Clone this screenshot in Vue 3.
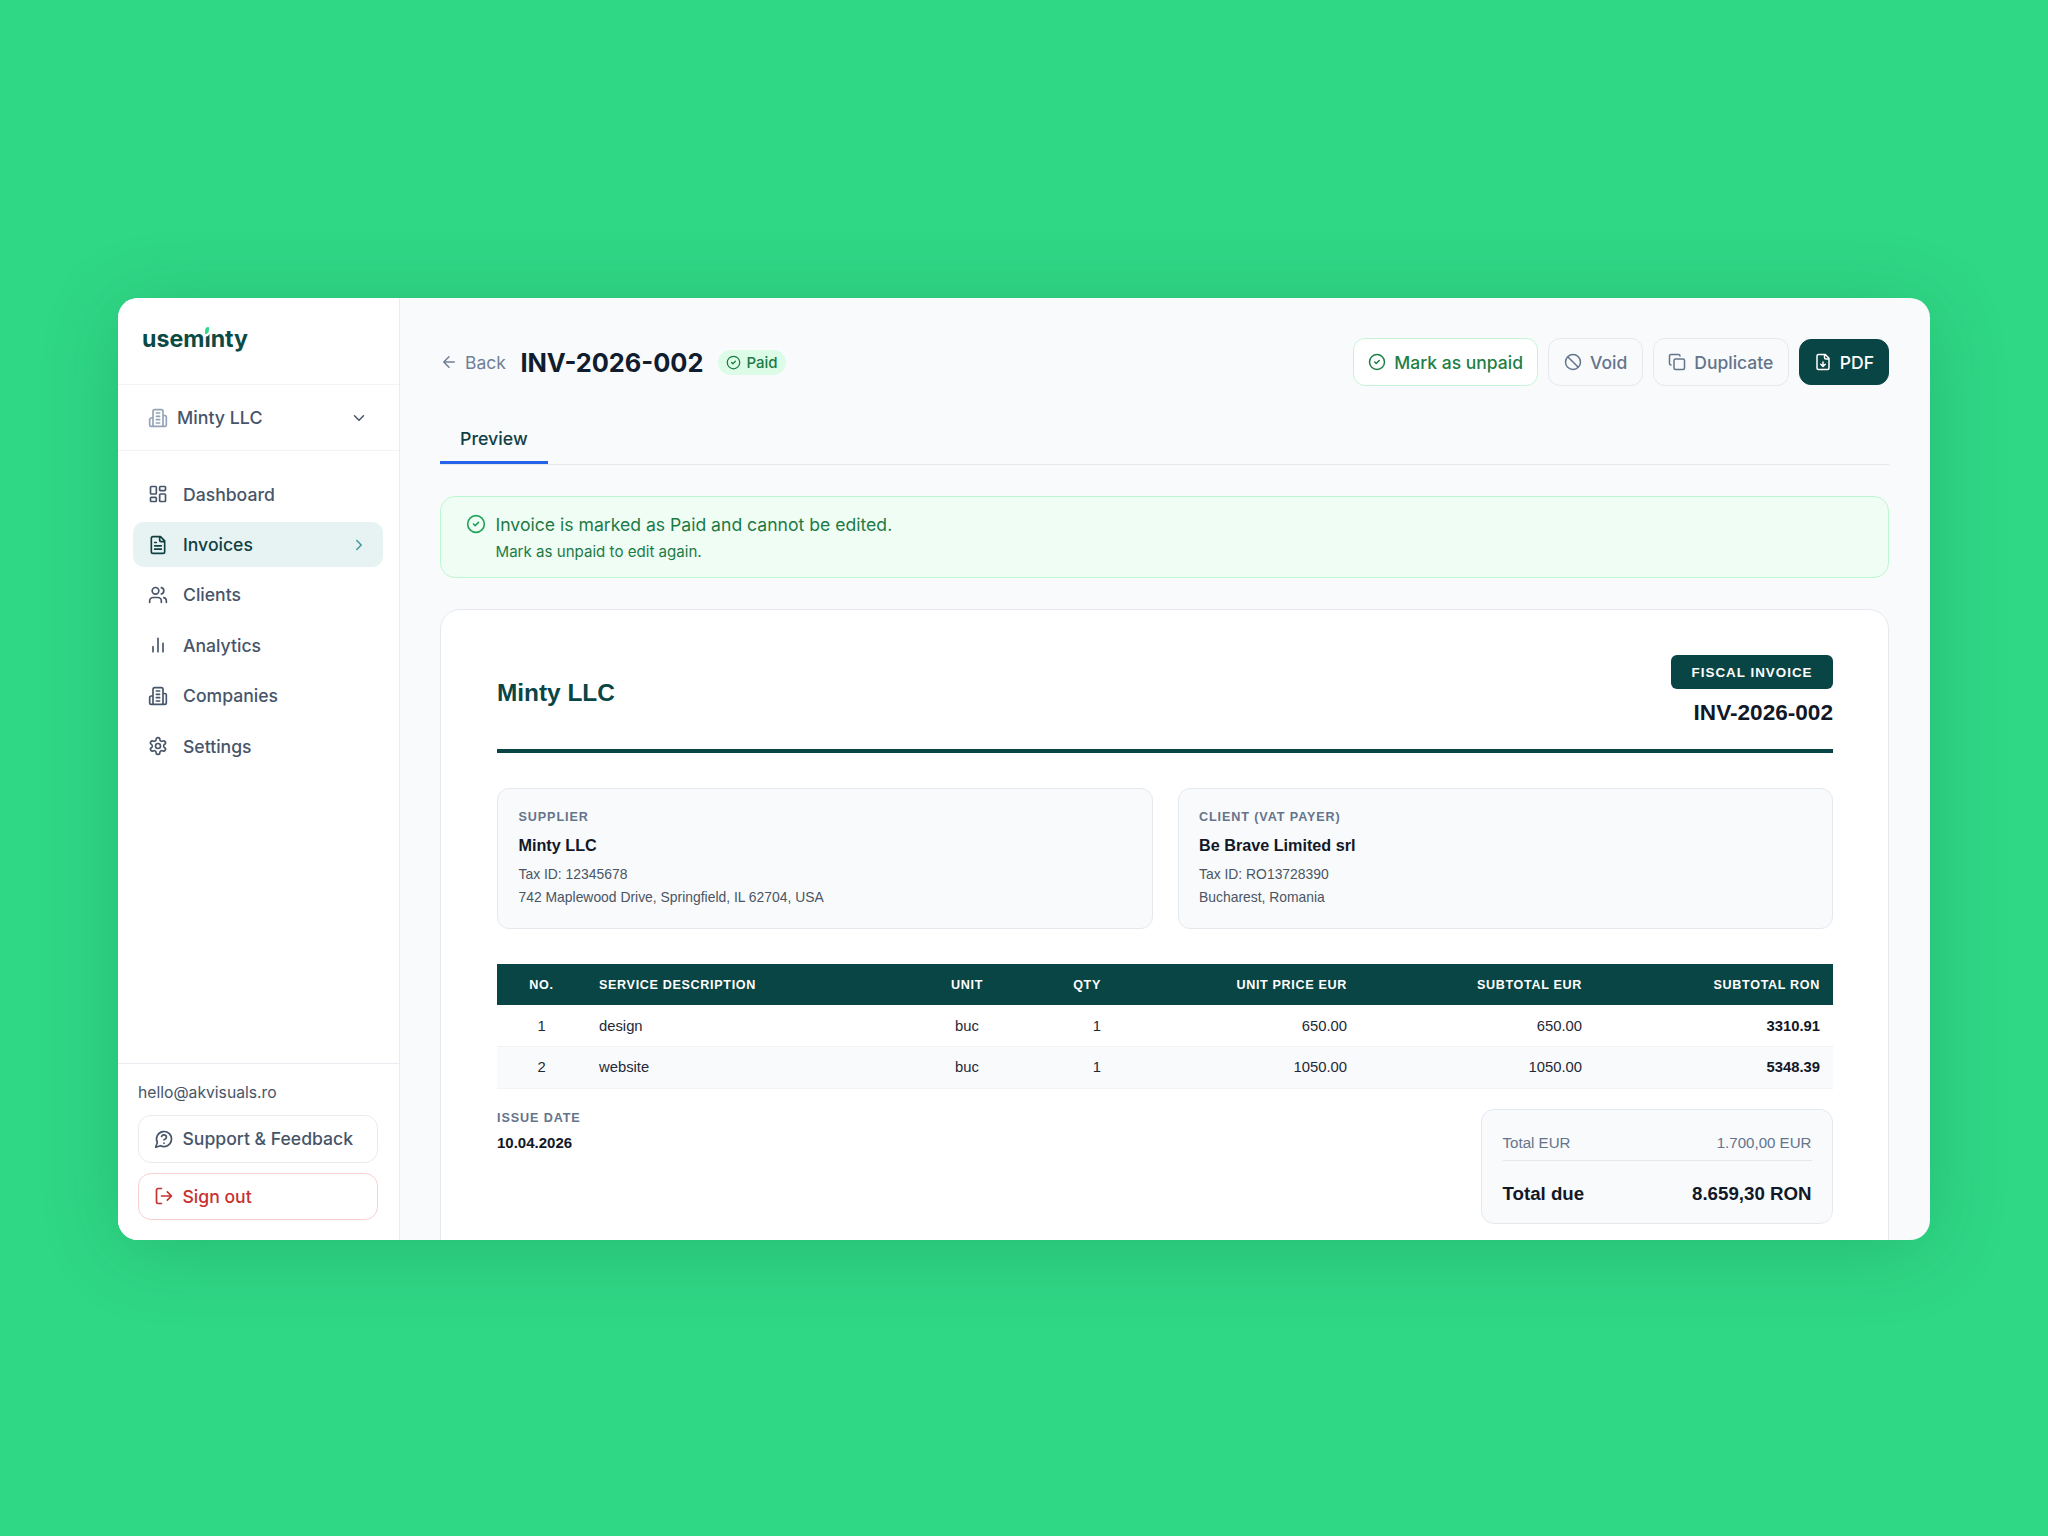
<template>
  <div class="page">
    <div class="window">
      <aside class="sidebar">
        <div class="logo">
          <span class="logo-text">useminty<i class="leaf"></i></span>
        </div>
        <div class="company">
          <svg class="ic company-ic" viewBox="0 0 24 24"><path :d="icons.building" /></svg>
          <span class="company-name">Minty LLC</span>
          <svg class="ic chev" viewBox="0 0 24 24"><path :d="icons.chevronDown" /></svg>
        </div>
        <nav class="nav">
          <a
            v-for="item in navItems"
            :key="item.label"
            class="nav-item"
            :class="{ active: item.active }"
          >
            <svg class="ic" viewBox="0 0 24 24"><path :d="icons[item.icon]" /></svg>
            <span>{{ item.label }}</span>
            <svg v-if="item.active" class="ic chev chev-active" viewBox="0 0 24 24"><path :d="icons.chevronRight" /></svg>
          </a>
        </nav>
        <div class="side-footer">
          <div class="email">hello@akvisuals.ro</div>
          <button class="side-btn">
            <svg class="ic" viewBox="0 0 24 24"><path :d="icons.support" /></svg>
            Support &amp; Feedback
          </button>
          <button class="side-btn danger">
            <svg class="ic" viewBox="0 0 24 24"><path :d="icons.logout" /></svg>
            Sign out
          </button>
        </div>
      </aside>

      <main class="main">
        <header class="top">
          <div class="top-left">
            <a class="back">
              <svg class="ic" viewBox="0 0 24 24"><path :d="icons.arrowLeft" /></svg>
              Back
            </a>
            <h1 class="title">INV-2026-002</h1>
            <span class="paid">
              <svg class="ic" viewBox="0 0 24 24"><path :d="icons.check" /></svg>
              Paid
            </span>
          </div>
          <div class="actions">
            <button class="btn btn-green">
              <svg class="ic" viewBox="0 0 24 24"><path :d="icons.check" /></svg>
              Mark as unpaid
            </button>
            <button class="btn">
              <svg class="ic" viewBox="0 0 24 24"><path :d="icons.ban" /></svg>
              Void
            </button>
            <button class="btn">
              <svg class="ic" viewBox="0 0 24 24"><path :d="icons.copy" /></svg>
              Duplicate
            </button>
            <button class="btn btn-dark">
              <svg class="ic" viewBox="0 0 24 24"><path :d="icons.fileDown" /></svg>
              PDF
            </button>
          </div>
        </header>

        <div class="tabs">
          <span class="tab">Preview</span>
        </div>

        <div class="alert">
          <svg class="ic" viewBox="0 0 24 24"><path :d="icons.check" /></svg>
          <div>
            <div class="alert-title">Invoice is marked as Paid and cannot be edited.</div>
            <div class="alert-sub">Mark as unpaid to edit again.</div>
          </div>
        </div>

        <section class="invoice">
          <div class="inv-head">
            <div class="inv-company">Minty LLC</div>
            <div class="inv-meta">
              <span class="fiscal">FISCAL INVOICE</span>
              <div class="inv-number">INV-2026-002</div>
            </div>
          </div>

          <div class="parties">
            <div v-for="party in parties" :key="party.label" class="party">
              <div class="label">{{ party.label }}</div>
              <div class="party-name">{{ party.name }}</div>
              <div class="party-line">{{ party.tax }}</div>
              <div class="party-line">{{ party.address }}</div>
            </div>
          </div>

          <table class="lines">
            <thead>
              <tr>
                <th class="c-no">NO.</th>
                <th class="c-desc">SERVICE DESCRIPTION</th>
                <th class="c-unit">UNIT</th>
                <th class="c-num c-qty">QTY</th>
                <th class="c-num c-price">UNIT PRICE EUR</th>
                <th class="c-num c-eur">SUBTOTAL EUR</th>
                <th class="c-num c-ron">SUBTOTAL RON</th>
              </tr>
            </thead>
            <tbody>
              <tr v-for="row in rows" :key="row.no">
                <td class="c-no">{{ row.no }}</td>
                <td class="c-desc">{{ row.desc }}</td>
                <td class="c-unit">buc</td>
                <td class="c-num">{{ row.qty }}</td>
                <td class="c-num">{{ row.price }}</td>
                <td class="c-num">{{ row.eur }}</td>
                <td class="c-num strong">{{ row.ron }}</td>
              </tr>
            </tbody>
          </table>

          <div class="inv-foot">
            <div>
              <div class="label">ISSUE DATE</div>
              <div class="issue-date">10.04.2026</div>
            </div>
            <div class="totals">
              <div class="total-row">
                <span>Total EUR</span>
                <span>1.700,00 EUR</span>
              </div>
              <div class="total-due">
                <span>Total due</span>
                <span>8.659,30 RON</span>
              </div>
            </div>
          </div>
        </section>
      </main>
    </div>
  </div>
</template>

<script setup>
const icons = {
  building: 'M6 22V4a2 2 0 0 1 2-2h8a2 2 0 0 1 2 2v18ZM6 12H4a2 2 0 0 0-2 2v6a2 2 0 0 0 2 2h2M18 9h2a2 2 0 0 1 2 2v9a2 2 0 0 1-2 2h-2M10 6h4M10 10h4M10 14h4M10 18h4',
  chevronDown: 'm6 9 6 6 6-6',
  chevronRight: 'm9 18 6-6-6-6',
  dashboard: 'M4 3h5a1 1 0 0 1 1 1v7a1 1 0 0 1-1 1H4a1 1 0 0 1-1-1V4a1 1 0 0 1 1-1ZM15 3h5a1 1 0 0 1 1 1v3a1 1 0 0 1-1 1h-5a1 1 0 0 1-1-1V4a1 1 0 0 1 1-1ZM15 12h5a1 1 0 0 1 1 1v7a1 1 0 0 1-1 1h-5a1 1 0 0 1-1-1v-7a1 1 0 0 1 1-1ZM4 16h5a1 1 0 0 1 1 1v3a1 1 0 0 1-1 1H4a1 1 0 0 1-1-1v-3a1 1 0 0 1 1-1Z',
  file: 'M15 2H6a2 2 0 0 0-2 2v16a2 2 0 0 0 2 2h12a2 2 0 0 0 2-2V7ZM14 2v4a2 2 0 0 0 2 2h4M10 9H8M16 13H8M16 17H8',
  users: 'M16 21v-2a4 4 0 0 0-4-4H6a4 4 0 0 0-4 4v2M9 3a4 4 0 1 0 0 8a4 4 0 1 0 0-8M22 21v-2a4 4 0 0 0-3-3.87M16 3.13a4 4 0 0 1 0 7.75',
  chart: 'M18 20V10M12 20V4M6 20v-6',
  settings: 'M12.22 2h-.44a2 2 0 0 0-2 2v.18a2 2 0 0 1-1 1.73l-.43.25a2 2 0 0 1-2 0l-.15-.08a2 2 0 0 0-2.73.73l-.22.38a2 2 0 0 0 .73 2.73l.15.1a2 2 0 0 1 1 1.72v.51a2 2 0 0 1-1 1.74l-.15.09a2 2 0 0 0-.73 2.73l.22.38a2 2 0 0 0 2.73.73l.15-.08a2 2 0 0 1 2 0l.43.25a2 2 0 0 1 1 1.73V20a2 2 0 0 0 2 2h.44a2 2 0 0 0 2-2v-.18a2 2 0 0 1 1-1.73l.43-.25a2 2 0 0 1 2 0l.15.08a2 2 0 0 0 2.73-.73l.22-.39a2 2 0 0 0-.73-2.73l-.15-.08a2 2 0 0 1-1-1.74v-.5a2 2 0 0 1 1-1.74l.15-.09a2 2 0 0 0 .73-2.73l-.22-.38a2 2 0 0 0-2.73-.73l-.15.08a2 2 0 0 1-2 0l-.43-.25a2 2 0 0 1-1-1.73V4a2 2 0 0 0-2-2zM12 9a3 3 0 1 0 0 6a3 3 0 1 0 0-6',
  support: 'M7.9 20A9 9 0 1 0 4 16.1L2 22ZM9.09 9a3 3 0 0 1 5.83 1c0 2-3 3-3 3M12 17h.01',
  logout: 'M9 21H5a2 2 0 0 1-2-2V5a2 2 0 0 1 2-2h4M16 17l5-5-5-5M21 12H9',
  arrowLeft: 'm12 19-7-7 7-7M19 12H5',
  check: 'M12 2a10 10 0 1 0 0 20a10 10 0 1 0 0-20M9 12l2 2 4-4',
  ban: 'M12 2a10 10 0 1 0 0 20a10 10 0 1 0 0-20M4.9 4.9l14.2 14.2',
  copy: 'M10 8h10a2 2 0 0 1 2 2v10a2 2 0 0 1-2 2H10a2 2 0 0 1-2-2V10a2 2 0 0 1 2-2ZM4 16c-1.1 0-2-.9-2-2V4c0-1.1.9-2 2-2h10c1.100 0 2 .9 2 2',
  fileDown: 'M15 2H6a2 2 0 0 0-2 2v16a2 2 0 0 0 2 2h12a2 2 0 0 0 2-2V7ZM14 2v4a2 2 0 0 0 2 2h4M12 18v-6M9 15l3 3 3-3'
}

const navItems = [
  { label: 'Dashboard', icon: 'dashboard' },
  { label: 'Invoices', icon: 'file', active: true },
  { label: 'Clients', icon: 'users' },
  { label: 'Analytics', icon: 'chart' },
  { label: 'Companies', icon: 'building' },
  { label: 'Settings', icon: 'settings' }
]

const parties = [
  { label: 'SUPPLIER', name: 'Minty LLC', tax: 'Tax ID: 12345678', address: '742 Maplewood Drive, Springfield, IL 62704, USA' },
  { label: 'CLIENT (VAT PAYER)', name: 'Be Brave Limited srl', tax: 'Tax ID: RO13728390', address: 'Bucharest, Romania' }
]

const rows = [
  { no: 1, desc: 'design', qty: 1, price: '650.00', eur: '650.00', ron: '3310.91' },
  { no: 2, desc: 'website', qty: 1, price: '1050.00', eur: '1050.00', ron: '5348.39' }
]
</script>

<style>
html,
body {
  margin: 0;
  background: #2fd885;
}
</style>

<style scoped>
.page {
  height: 100vh;
  padding-top: 2px;
  box-sizing: border-box;
  display: flex;
  align-items: center;
  justify-content: center;
  font-family: Inter, "Liberation Sans", sans-serif;
}

.window {
  width: 1812px;
  height: 942px;
  display: flex;
  border-radius: 20px;
  overflow: hidden;
  background: #f8fafc;
  box-shadow: 0 10px 80px rgba(0, 70, 45, 0.2);
}

.ic {
  width: 20px;
  height: 20px;
  flex: none;
  fill: none;
  stroke: currentColor;
  stroke-width: 2;
  stroke-linecap: round;
  stroke-linejoin: round;
}

/* sidebar */
.sidebar {
  width: 282px;
  flex: none;
  display: flex;
  flex-direction: column;
  background: #fff;
  border-right: 1.5px solid #e9edf2;
  box-sizing: border-box;
}

.logo {
  padding: 0 24px 5px;
  height: 81px;
  display: flex;
  align-items: center;
  border-bottom: 1.5px solid #f1f4f7;
}

.logo-text {
  position: relative;
  font-size: 23.2px;
  font-weight: 700;
  color: #0b4a45;
}

.leaf {
  position: absolute;
  left: 62.5px;
  top: 2px;
  width: 4.5px;
  height: 7px;
  background: #2fd985;
  border-radius: 70% 10% 70% 10%;
  box-shadow: 0 1px 0 1.5px #fff;
}

.company {
  height: 65px;
  padding: 0 31px 0 30px;
  display: flex;
  align-items: center;
  gap: 9px;
  border-bottom: 1.5px solid #f1f4f7;
  font-size: 17.8px;
  font-weight: 500;
  color: #475569;
}

.company-ic {
  color: #94a3b8;
}

.company-name {
  flex: 1;
}

.chev {
  width: 18px;
  height: 18px;
  color: #475569;
}

.nav {
  padding: 21px 16px 0 15px;
  display: flex;
  flex-direction: column;
  gap: 6px;
  flex: 1;
}

.nav-item {
  height: 44.4px;
  padding: 0 15px;
  display: flex;
  align-items: center;
  gap: 15px;
  border-radius: 11px;
  font-size: 17.6px;
  font-weight: 500;
  color: #475569;
}

.nav-item span {
  flex: 1;
}

.nav-item.active {
  background: #e6f3f2;
  color: #10403f;
}

.chev-active {
  color: #3f9a97;
}

.side-footer {
  border-top: 1.5px solid #e9edf2;
  padding: 18px 21px 20px 20px;
  display: flex;
  flex-direction: column;
}

.email {
  font-size: 15.7px;
  color: #475569;
  line-height: 22px;
  margin-bottom: 11px;
}

.side-btn {
  height: 47.5px;
  padding: 0 15px;
  display: flex;
  align-items: center;
  gap: 8.5px;
  background: #fff;
  border: 1.5px solid #e8ecf1;
  border-radius: 13px;
  font-family: inherit;
  font-size: 17.6px;
  font-weight: 500;
  color: #475569;
}

.side-btn.danger {
  margin-top: 10px;
  border-color: #f9cfd0;
  color: #c8302f;
}

/* header */
.main {
  flex: 1;
  min-width: 0;
  padding: 40px 41px 0 40px;
  box-sizing: border-box;
}

.top {
  height: 48px;
  display: flex;
  align-items: center;
  justify-content: space-between;
}

.top-left {
  display: flex;
  align-items: center;
}

.back {
  display: flex;
  align-items: center;
  gap: 7px;
  font-size: 17.5px;
  color: #718096;
}

.back .ic {
  width: 18px;
  height: 18px;
}

.title {
  margin: 0 14.5px;
  font-size: 25.4px;
  font-weight: 700;
  color: #111c2e;
}

.paid {
  height: 25px;
  padding: 0 8.5px;
  display: flex;
  align-items: center;
  gap: 5px;
  border-radius: 13px;
  background: #dcfce7;
  font-size: 15px;
  font-weight: 500;
  color: #1d7a45;
}

.paid .ic {
  width: 15px;
  height: 15px;
}

.actions {
  display: flex;
  align-items: center;
  gap: 10px;
}

.btn {
  height: 48px;
  padding: 0 14.5px;
  display: flex;
  align-items: center;
  gap: 8px;
  background: #f8fafc;
  border: 1.5px solid #e5e9ee;
  border-radius: 12px;
  font-family: inherit;
  font-size: 17.5px;
  font-weight: 500;
  color: #64748b;
}

.btn .ic {
  width: 18px;
  height: 18px;
}

.btn-green {
  background: #fff;
  border-color: #c4f3d6;
  color: #1e7f46;
}

.btn-dark {
  height: 46px;
  padding: 0 14px;
  background: #0a4545;
  border-color: #0a4545;
  color: #fff;
}

/* tabs */
.tabs {
  height: 51px;
  margin-top: 27px;
  display: flex;
  border-bottom: 1.5px solid #e5e9ee;
}

.tab {
  height: 51px;
  padding: 3px 20px 0;
  display: flex;
  align-items: center;
  box-sizing: border-box;
  border-bottom: 3px solid #2563eb;
  font-size: 17.8px;
  font-weight: 500;
  color: #123f44;
}

/* alert */
.alert {
  height: 82px;
  margin-top: 31px;
  padding: 16px 25px;
  display: flex;
  gap: 9.5px;
  box-sizing: border-box;
  background: #f0fdf4;
  border: 1.5px solid #bbf7d0;
  border-radius: 15px;
  color: #1c7a45;
}

.alert .ic {
  color: #22a45d;
  margin-top: 1px;
}

.alert-title {
  font-size: 17.6px;
  line-height: 23px;
}

.alert-sub {
  margin-top: 6px;
  font-size: 15.1px;
  line-height: 20px;
}

/* invoice */
.invoice {
  margin-top: 31px;
  padding: 45px 55px 60px 56px;
  background: #fff;
  border: 1.5px solid #e5e9ee;
  border-radius: 20px;
  box-sizing: border-box;
  font-family: "Liberation Sans", Arial, sans-serif;
  color: #111827;
}

.inv-head {
  display: flex;
  align-items: center;
  justify-content: space-between;
  padding-bottom: 22px;
  border-bottom: 4px solid #0a4545;
}

.inv-company {
  font-size: 24.4px;
  font-weight: 700;
  color: #0a4545;
  padding-top: 3px;
}

.inv-meta {
  display: flex;
  flex-direction: column;
  align-items: flex-end;
  gap: 10px;
}

.fiscal {
  height: 34px;
  padding: 0 20.5px;
  display: flex;
  align-items: center;
  border-radius: 6px;
  background: #0a4545;
  color: #fff;
  font-size: 13.4px;
  font-weight: 700;
  letter-spacing: 1px;
}

.inv-number {
  font-size: 22.6px;
  font-weight: 700;
  line-height: 28px;
}

.parties {
  margin-top: 35px;
  display: grid;
  grid-template-columns: 1fr 1fr;
  gap: 25px;
}

.party {
  height: 141px;
  padding: 20px 20.5px;
  box-sizing: border-box;
  background: #f8fafc;
  border: 1.5px solid #e5e9ee;
  border-radius: 12px;
}

.label {
  font-size: 12.6px;
  line-height: 16px;
  font-weight: 700;
  letter-spacing: 0.9px;
  color: #64748b;
}

.party-name {
  margin-top: 9px;
  font-size: 16.2px;
  line-height: 22px;
  font-weight: 700;
}

.party-line {
  margin-top: 6px;
  font-size: 13.9px;
  line-height: 17px;
  color: #4b5563;
}

.party-name + .party-line {
  margin-top: 10px;
}

.lines {
  width: 100%;
  margin-top: 35px;
  border-collapse: collapse;
  table-layout: fixed;
  font-size: 14.8px;
}

.lines th {
  height: 41px;
  padding: 0 13px;
  box-sizing: border-box;
  background: #0a4545;
  color: #fff;
  font-size: 12.6px;
  font-weight: 700;
  letter-spacing: 0.65px;
  text-align: left;
}

.lines td {
  height: 41.5px;
  padding: 0 13px;
  box-sizing: border-box;
  color: #1f2937;
  border-bottom: 1px solid #f1f4f7;
}

.lines tbody tr:nth-child(2) td {
  background: #f8fafc;
}

.lines .c-no {
  width: 89px;
  text-align: center;
}

.lines .c-unit {
  width: 106px;
  text-align: center;
}

.lines .c-num {
  text-align: right;
}

.lines .c-qty {
  width: 94px;
}

.lines .c-price {
  width: 246px;
}

.lines .c-eur {
  width: 235px;
}

.lines .c-ron {
  width: 238px;
}

.lines .strong {
  font-weight: 700;
  color: #111827;
}

.inv-foot {
  margin-top: 20px;
  display: flex;
  justify-content: space-between;
  align-items: flex-start;
}

.inv-foot .label {
  margin-top: 1.5px;
}

.issue-date {
  margin-top: 8px;
  font-size: 15px;
  font-weight: 700;
}

.totals {
  width: 352px;
  height: 115px;
  padding: 24px 20.5px 0;
  box-sizing: border-box;
  background: #f8fafc;
  border: 1.5px solid #e5e9ee;
  border-radius: 13px;
}

.total-row {
  display: flex;
  justify-content: space-between;
  padding-bottom: 8px;
  border-bottom: 1.5px solid #e5e9ee;
  font-size: 15.1px;
  line-height: 18px;
  color: #64748b;
}

.total-due {
  margin-top: 21px;
  display: flex;
  justify-content: space-between;
  font-size: 18.7px;
  line-height: 24px;
  font-weight: 700;
}
</style>
